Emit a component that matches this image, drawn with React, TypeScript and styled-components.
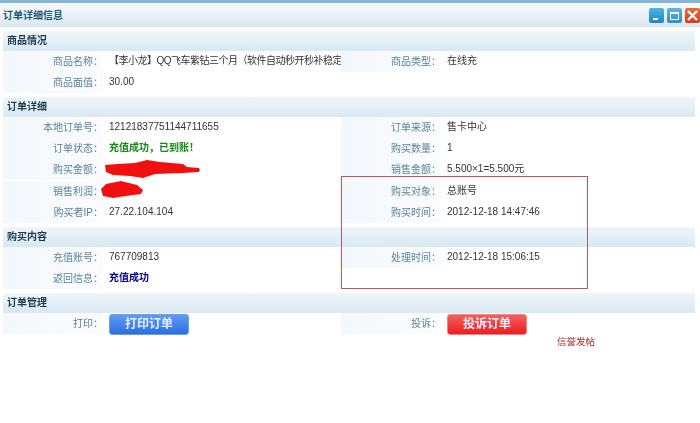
import styled, { createGlobalStyle } from "styled-components";

const GlobalStyle = createGlobalStyle`
  html, body {
    margin: 0;
    padding: 0;
    background: #ffffff;
  }
  body {
    font-family: "Liberation Sans", "Noto Sans CJK SC", sans-serif;
    font-size: 10px;
    color: #333333;
  }
`;

const Page = styled.div`
  position: relative;
  width: 700px;
  height: 423px;
  overflow: hidden;
  filter: blur(0.3px);
`;

const TitleBar = styled.div`
  display: flex;
  align-items: center;
  justify-content: space-between;
  height: 23px;
  border-top: 3px solid #84b6d6;
  border-bottom: 1px solid #d5e3ee;
  background: linear-gradient(#f8fafc, #dde8f1);
  margin-bottom: 4px;
`;

const Title = styled.div`
  margin-left: 3px;
  font-size: 10px;
  font-weight: 700;
  color: #1c5a78;
`;

const WindowButtons = styled.div`
  display: flex;
  gap: 3px;
  margin-top: 1px;
`;

const WindowButton = styled.div<{ $from: string; $to: string }>`
  display: flex;
  width: 15px;
  height: 15px;
  border-radius: 2px;
  background: linear-gradient(${(p) => p.$from}, ${(p) => p.$to});
`;

const Content = styled.div`
  padding: 0 5px 0 3px;
`;

const Section = styled.section`
  margin-bottom: 4px;
`;

const SectionHead = styled.div`
  height: 19.5px;
  line-height: 19px;
  padding-left: 4px;
  font-size: 10px;
  font-weight: 700;
  color: #1d3c4e;
  background: linear-gradient(#eff6fa, #d9e8f2);
`;

const Row = styled.div`
  display: grid;
  grid-template-columns: 100px 238px 100px 1fr;
  height: 21.33px;
  line-height: 21px;
`;

const Label = styled.div`
  margin-bottom: 1px;
  text-align: right;
  color: #5d8297;
  background: linear-gradient(90deg, #f3f8fc, #fafcfe);
`;

const Value = styled.div<{ $tone?: "green" | "blue"; $tight?: boolean }>`
  padding-left: 6px;
  margin-top: -1px;
  white-space: nowrap;
  letter-spacing: ${(p) => (p.$tight ? "-0.5px" : "normal")};
  color: ${(p) =>
    p.$tone === "green" ? "#148a14" : p.$tone === "blue" ? "#00008c" : "#333333"};
  font-weight: ${(p) => (p.$tone ? 700 : 400)};
`;

const ActionButton = styled.div<{ $from: string; $to: string; $border: string }>`
  width: 80px;
  height: 21px;
  margin: 1px 0 0 6px;
  line-height: 19px;
  text-align: center;
  box-sizing: border-box;
  border: 1px solid ${(p) => p.$border};
  border-radius: 3px;
  font-size: 12px;
  font-weight: 700;
  color: #e6efff;
  background: linear-gradient(${(p) => p.$from}, ${(p) => p.$to});
`;

const Scribble = styled.svg<{ $left: number; $top: number }>`
  position: absolute;
  left: ${(p) => p.$left}px;
  top: ${(p) => p.$top}px;
`;

const Highlight = styled.div`
  position: absolute;
  left: 341px;
  top: 176px;
  width: 245px;
  height: 111px;
  border: 1px solid #c0565a;
`;

const CreditLink = styled.div`
  position: absolute;
  left: 557px;
  top: 334px;
  font-size: 9.5px;
  color: #b02020;
`;

const App = () => {
  return (
    <Page>
      <GlobalStyle />
      <TitleBar>
        <Title>订单详细信息</Title>
        <WindowButtons>
          <WindowButton $from="#4fb4e6" $to="#1f86c6">
            <svg width="15" height="15" viewBox="0 0 15 15">
              <rect x="4" y="10" width="5" height="2" fill="#ffffff" />
            </svg>
          </WindowButton>
          <WindowButton $from="#62b4dc" $to="#2f8fc4">
            <svg width="15" height="15" viewBox="0 0 15 15">
              <rect x="3.5" y="4.5" width="8" height="7" fill="none" stroke="#ffffff" />
              <rect x="3" y="4" width="9" height="2" fill="#ffffff" />
            </svg>
          </WindowButton>
          <WindowButton $from="#ee6a3c" $to="#d93a1e">
            <svg width="15" height="15" viewBox="0 0 15 15">
              <path d="M3 3 L12 12 M12 3 L3 12" stroke="#ffffff" strokeWidth="2.4" />
            </svg>
          </WindowButton>
        </WindowButtons>
      </TitleBar>

      <Content>
        <Section>
          <SectionHead>商品情况</SectionHead>
          <Row>
            <Label>商品名称：</Label>
            <Value $tight>【李小龙】QQ飞车紫钻三个月（软件自动秒开秒补稳定</Value>
            <Label>商品类型：</Label>
            <Value>在线充</Value>
          </Row>
          <Row>
            <Label>商品面值：</Label>
            <Value>30.00</Value>
          </Row>
        </Section>

        <Section>
          <SectionHead>订单详细</SectionHead>
          <Row>
            <Label>本地订单号：</Label>
            <Value>12121837751144711655</Value>
            <Label>订单来源：</Label>
            <Value>售卡中心</Value>
          </Row>
          <Row>
            <Label>订单状态：</Label>
            <Value $tone="green">充值成功，已到账！</Value>
            <Label>购买数量：</Label>
            <Value>1</Value>
          </Row>
          <Row>
            <Label>购买金额：</Label>
            <Value />
            <Label>销售金额：</Label>
            <Value>5.500×1=5.500元</Value>
          </Row>
          <Row>
            <Label>销售利润：</Label>
            <Value />
            <Label>购买对象：</Label>
            <Value>总账号</Value>
          </Row>
          <Row>
            <Label>购买者IP：</Label>
            <Value>27.22.104.104</Value>
            <Label>购买时间：</Label>
            <Value>2012-12-18 14:47:46</Value>
          </Row>
        </Section>

        <Section>
          <SectionHead>购买内容</SectionHead>
          <Row>
            <Label>充值账号：</Label>
            <Value>767709813</Value>
            <Label>处理时间：</Label>
            <Value>2012-12-18 15:06:15</Value>
          </Row>
          <Row>
            <Label>返回信息：</Label>
            <Value $tone="blue">充值成功</Value>
          </Row>
        </Section>

        <Section>
          <SectionHead>订单管理</SectionHead>
          <Row>
            <Label>打印：</Label>
            <ActionButton $from="#5f9cf4" $to="#2a6fe0" $border="#6f9fd8">
              打印订单
            </ActionButton>
            <Label>投诉：</Label>
            <ActionButton $from="#f4605c" $to="#f01c22" $border="#e88a86">
              投诉订单
            </ActionButton>
          </Row>
        </Section>
      </Content>

      <Scribble $left={105} $top={160} width="96" height="19" viewBox="0 0 96 19">
        <path
          d="M0 5 L12 4 L30 3 L42 0 L55 2 L78 4 L82 7 L94 8 Q96 11 93 12 L78 13 L50 14 L38 18 L25 16 L8 15 L1 12 Z"
          fill="#f01010"
        />
      </Scribble>
      <Scribble $left={101} $top={181} width="44" height="18" viewBox="0 0 44 18">
        <path
          d="M0 8 L5 3 L20 0 L36 4 L42 9 L40 13 L25 15 L12 17 L2 15 Z"
          fill="#f01010"
        />
      </Scribble>
      <Highlight />
      <CreditLink>信誉发帖</CreditLink>
    </Page>
  );
};

export default App;
